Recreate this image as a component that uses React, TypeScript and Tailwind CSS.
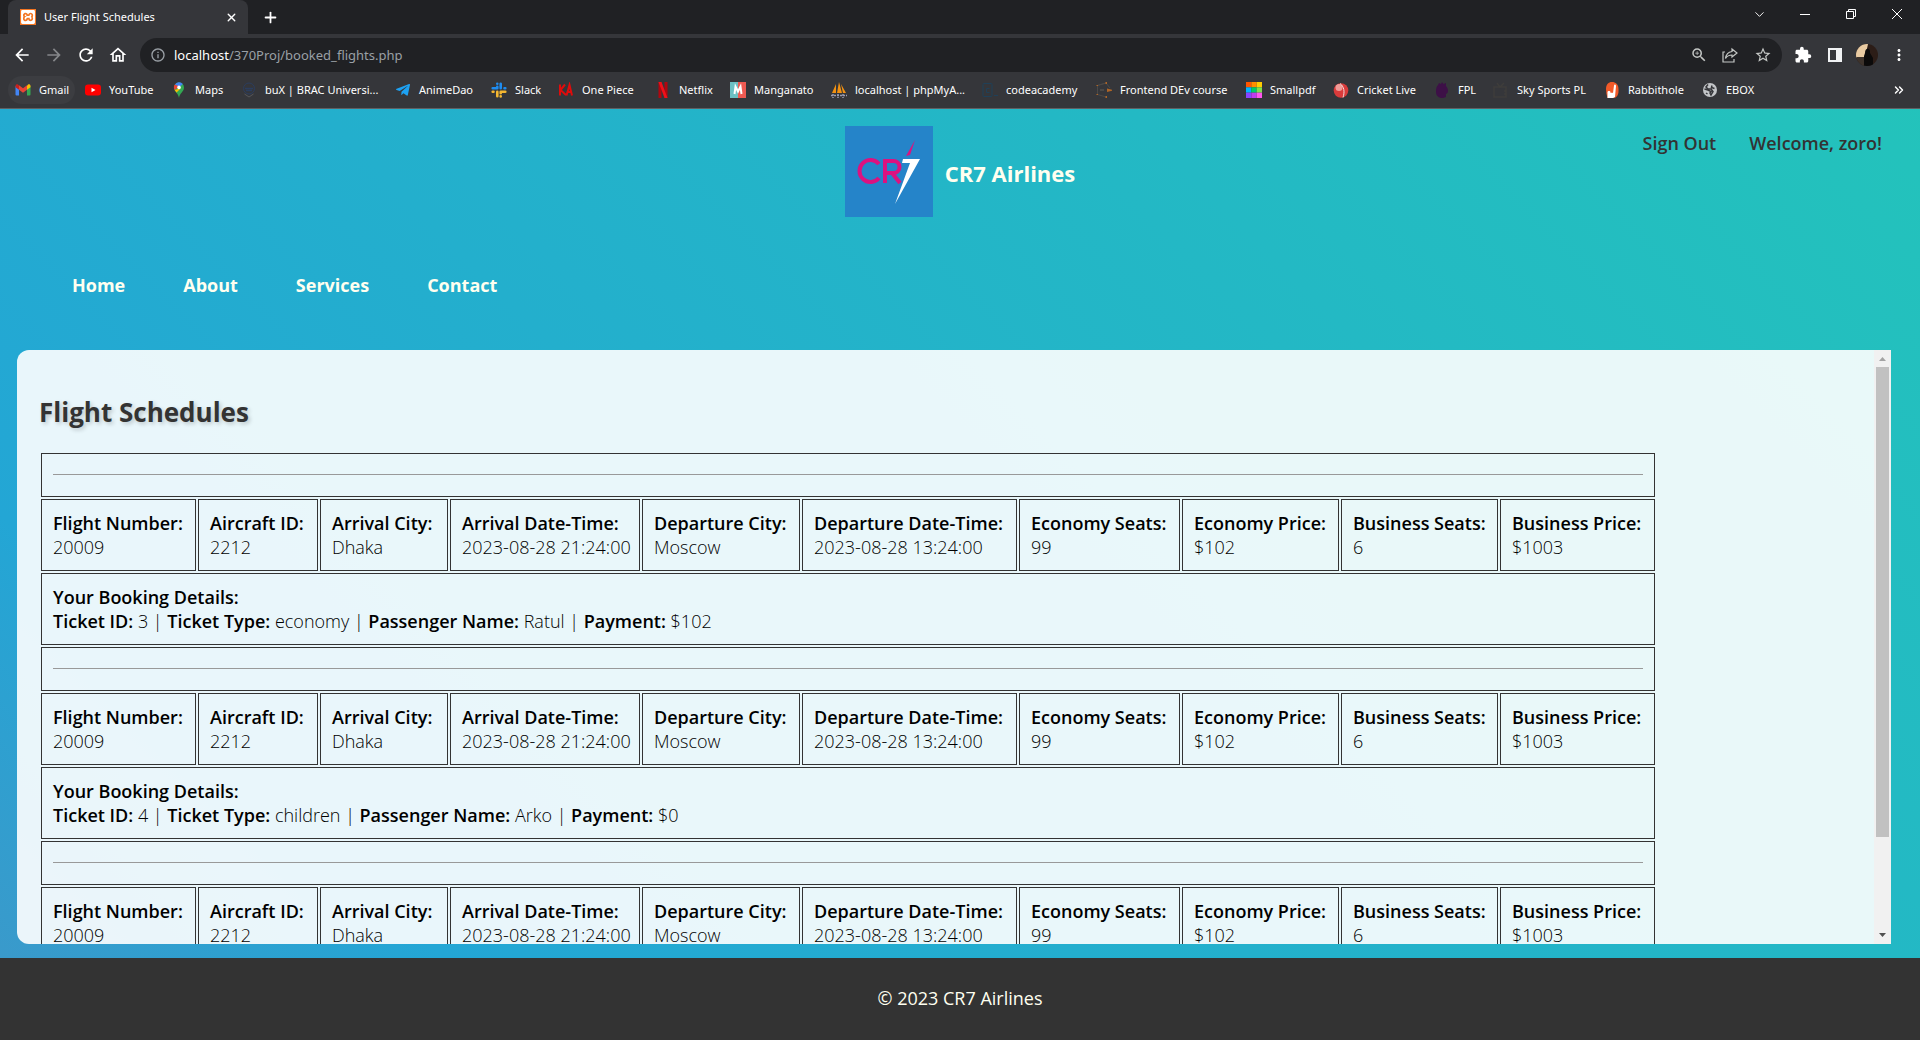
import React from "react";
import { ChevronDown, ChevronsRight, Plus, X } from "lucide-react";
import { SiXampp } from "react-icons/si";
import { FaTelegramPlane } from "react-icons/fa";
import { MdExtension, MdMoreVert, MdOutlineHome, MdRefresh, MdOutlineInfo, MdArrowBack, MdArrowForward, MdZoomIn, MdStarOutline } from "react-icons/md";

const svg = "h-4 w-4 shrink-0";

function GmailIcon() {
  return (
    <svg className={svg} viewBox="0 0 16 16">
      <path d="M0.5 4v8.5a1 1 0 0 0 1 1H4V7z" fill="#4285f4" />
      <path d="M15.5 4v8.5a1 1 0 0 1-1 1H12V7z" fill="#34a853" />
      <path d="M12 3.8v4l3.5-2.6V4c0-1.6-1.6-2.2-2.7-1.3z" fill="#fbbc04" />
      <path d="M4 7.8v-4.5l4 3 4-3v4.5l-4 3z" fill="#ea4335" />
      <path d="M0.5 4v1.2L4 7.8v-4.5l-.8-.6C2.1 1.9.5 2.5.5 4z" fill="#c5221f" />
    </svg>
  );
}
function YoutubeIcon() {
  return (
    <svg className={svg} viewBox="0 0 16 16">
      <rect y="2.5" width="16" height="11" rx="3" fill="#f00" />
      <path d="M6.5 5.7v4.6l4-2.3z" fill="#fff" />
    </svg>
  );
}
function MapsIcon() {
  return (
    <svg className={svg} viewBox="0 0 16 16">
      <path d="M3 5.5A5 5 0 0 1 13 5.5C13 10 8.8 10.5 8 16 7.2 10.5 3 10 3 5.5z" fill="#34a853" />
      <path d="M3.9 2.7 8 5.5l3.8-3.6A5 5 0 0 0 3.9 2.7z" fill="#4285f4" />
      <path d="M3.9 2.4A5 5 0 0 0 3.7 8L8 4.5z" fill="#ea4335" />
      <path d="M3.7 8c.5 1 1.2 1.8 1.9 2.6L10 6z" fill="#fbbc04" />
      <circle cx="8" cy="5.4" r="1.8" fill="#fff" />
    </svg>
  );
}
function BuxIcon() {
  return (
    <svg className={svg} viewBox="0 0 16 16" fill="none">
      <circle cx="8" cy="6.5" r="5.5" stroke="#2b3d5e" />
      <path d="M4 6.5h8M5 8.5h6" stroke="#2b3d5e" strokeWidth="1.5" />
      <path d="M3.5 12 8 15l4.5-3" stroke="#55565a" />
    </svg>
  );
}
function SlackIcon() {
  return (
    <svg className={svg} viewBox="0 0 16 16" strokeWidth="2.6" strokeLinecap="round">
      <path d="M6.3 4.8v1.5M1.7 6.3h4.6M6.3 1.7v.1M9.7 1.7v4.6M13.5 6.3h.8" stroke="#1e8cf0" />
      <path d="M1.7 9.7h.8M6.3 9.7v4.6M9.7 9.7h4.6M9.7 9.7v1.5M9.7 14.3v.1" stroke="#f5b731" />
    </svg>
  );
}
function KaIcon() {
  return (
    <svg className={svg} viewBox="0 0 16 16" fill="none" stroke="#e00b0b" strokeWidth="2">
      <path d="M2 2.5v11M7 2.5 2.5 8 8 13M8.5 13.5l3-10.5 2.5 10.5M9.5 10h4" />
    </svg>
  );
}
function NetflixIcon() {
  return (
    <svg className={svg} viewBox="0 0 16 16">
      <path d="M3.5 0h3v16h-3zM9.5 0h3v16h-3z" fill="#b1060f" />
      <path d="M3.5 0h3l6 16h-3z" fill="#f0101a" />
    </svg>
  );
}
function ManganatoIcon() {
  return (
    <svg className={svg} viewBox="0 0 16 16">
      <path d="M0 0h8v16H0z" fill="#6cc0c4" />
      <path d="M8 0h8v16H8z" fill="#ee5a52" />
      <path d="M4.5 12 5.5 4.5l2.5 5 2.5-5 1 7.5" fill="none" stroke="#fff" strokeWidth="2" />
    </svg>
  );
}
function PhpMyAdminIcon() {
  return (
    <svg className={svg} viewBox="0 0 16 16">
      <path d="M1 11 5 2v9zM6 11 8 0l3 11zM10 2l5 9h-3z" fill="#f29111" />
      <path d="M0 13.5h16M2 12v4M7 12v4M12 12v4" stroke="#9b9bb0" strokeWidth="1.5" strokeDasharray="2 1" />
    </svg>
  );
}
function CodeIcon() {
  return (
    <svg className={svg} viewBox="0 0 16 16" fill="none" stroke="#1f4058">
      <rect x="1" y="1.5" width="9" height="13" rx="1" />
      <path d="M7.5 6.5h-3v4h3M12 13.5h4" />
    </svg>
  );
}
function FrontendIcon() {
  return (
    <svg className={svg} viewBox="0 0 16 16" fill="none">
      <path d="M10 1 1.5 3.5v9L10 15M1.5 3.5 10 1l4 5" stroke="#4b4947" />
      <path d="M4 8h4" stroke="#4b4947" strokeWidth="2" />
      <path d="M11 6.5v3.5l5-1.2v-1z" fill="#b06526" />
      <path d="M9.5 0h1.5v2H9.5zM.5 3h1.5v1H.5zM.5 12h1.5v1H.5zM9.5 14h1.5v2H9.5z" fill="#b06526" />
    </svg>
  );
}
function SmallpdfIcon() {
  const cells = ["#ff5500", "#ff8c00", "#ffcc00", "#00b4ff", "#00cc66", "#7ddf4f", "#8844ff", "#c03bf0", "#ff55ee"];
  return (
    <svg className={svg} viewBox="0 0 15 15">
      {cells.map((c, i) => (
        <rect key={c} x={(i % 3) * 5} y={Math.floor(i / 3) * 5} width="5" height="5" fill={c} />
      ))}
    </svg>
  );
}
function CricketIcon() {
  return (
    <svg className={svg} viewBox="0 0 16 16">
      <circle cx="8" cy="8.5" r="7.3" fill="#d93b3b" />
      <circle cx="6" cy="5.5" r="3.5" fill="#f5b5b0" opacity=".8" />
      <path d="M7 1.5c4 3 5 8 3 14" stroke="#f4dcdc" fill="none" />
    </svg>
  );
}
function FplIcon() {
  return (
    <svg className={svg} viewBox="0 0 16 16">
      <path d="M4 3 5 1l2 1 1-2 1.5 2L12 1v3c2 2 2.5 5 1.5 7l-1.5 1v3l-3 1c-4 0-7-2-7-6 0-3 0-5 2-7z" fill="#3d1047" />
    </svg>
  );
}
function SkyIcon() {
  return (
    <svg className={svg} viewBox="0 0 16 16" fill="none" stroke="#3e3d3b" strokeWidth="1.5">
      <path d="M1 5h12v10H1zM4 1l3 4 4-4M11 9h2M11 12h2" />
    </svg>
  );
}
function RabbitIcon() {
  return (
    <svg className={svg} viewBox="0 0 16 16">
      <path d="M2 7C2 2.5 4.5 0 8 0s6.5 2.5 6.5 7v2c0 4-2 7-5 7H3.5C2.5 13 2 10 2 7z" fill="#f15a29" />
      <path d="M3.5 16V10c0-1.5 3-1.5 3 0v1c1-.5 2-.5 2.5 0L10 3.5c.3-1.5 2-1 2 .5L11 15l-2 1z" fill="#fff" />
    </svg>
  );
}
function EboxIcon() {
  return (
    <svg className={svg} viewBox="0 0 16 16">
      <circle cx="8" cy="8" r="7" fill="#c3c5c8" />
      <path d="M6 2.5 4 5l2 2h3l2 2.5-2 3.5-1-2 1-1.5-3-1.5-3.5-1M10 3.5 9.5 5.5l3 1M4 11l1.5 1" fill="none" stroke="#35363a" strokeWidth="1.5" />
    </svg>
  );
}

const bookmarks = [
  { label: "Gmail", icon: <GmailIcon />, style: "mr-2.5 w-[67px] rounded-full bg-[#3c3d41] pl-[7px]" },
  { label: "YouTube", icon: <YoutubeIcon />, style: "w-[86px]" },
  { label: "Maps", icon: <MapsIcon />, style: "w-[70px]" },
  { label: "buX | BRAC Universi...", icon: <BuxIcon />, style: "w-[154px]" },
  { label: "AnimeDao", icon: <FaTelegramPlane className="h-4 w-4 shrink-0 text-[#1da1f2]" />, style: "w-[96px]" },
  { label: "Slack", icon: <SlackIcon />, style: "w-[67px]" },
  { label: "One Piece", icon: <KaIcon />, style: "w-[97px]" },
  { label: "Netflix", icon: <NetflixIcon />, style: "w-[75px]" },
  { label: "Manganato", icon: <ManganatoIcon />, style: "w-[101px]" },
  { label: "localhost | phpMyA...", icon: <PhpMyAdminIcon />, style: "w-[151px]" },
  { label: "codeacademy", icon: <CodeIcon />, style: "w-[114px]" },
  { label: "Frontend DEv course", icon: <FrontendIcon />, style: "w-[150px]" },
  { label: "Smallpdf", icon: <SmallpdfIcon />, style: "w-[87px]" },
  { label: "Cricket Live", icon: <CricketIcon />, style: "w-[101px]" },
  { label: "FPL", icon: <FplIcon />, style: "w-[59px]" },
  { label: "Sky Sports PL", icon: <SkyIcon />, style: "w-[111px]" },
  { label: "Rabbithole", icon: <RabbitIcon />, style: "w-[98px]" },
  { label: "EBOX", icon: <EboxIcon />, style: "w-[70px]" },
];

function Browser() {
  return (
    <div className="shrink-0 bg-[#35363a] font-['Noto_Sans',sans-serif] text-white">
      <div className="flex h-[34px] items-stretch bg-[#202124]">
        <div className="ml-2 flex w-60 items-center rounded-t-lg bg-[#35363a] pr-2.5 pl-3">
          <span className="flex h-4 w-4 items-center justify-center bg-[#f37623]">
            <SiXampp className="h-3.5 w-3.5 text-white" />
          </span>
          <span className="ml-2 flex-1 text-[11px]">User Flight Schedules</span>
          <button aria-label="Close tab"><X size={13} strokeWidth={2.5} /></button>
        </div>
        <button aria-label="New tab" className="ml-3.5"><Plus size={17} strokeWidth={2.5} /></button>
        <div className="ml-auto flex items-center pb-1.5">
          <button aria-label="Search tabs" className="flex w-[46px] justify-center"><ChevronDown size={15} strokeWidth={1.5} /></button>
          <button aria-label="Minimize" className="flex w-[46px] justify-center"><svg width="10" height="10"><path d="M0 5.5h10" stroke="#fff" /></svg></button>
          <button aria-label="Restore" className="flex w-[46px] justify-center">
            <svg width="10" height="10" fill="none" stroke="#fff"><path d="M.5 2.5h7v7h-7zM2.5 2.5v-2h7v7h-2" /></svg>
          </button>
          <button aria-label="Close" className="flex w-[46px] justify-center"><svg width="10" height="10"><path d="M0 0l10 10M10 0L0 10" stroke="#fff" /></svg></button>
        </div>
      </div>
      <div className="flex h-[42px] items-center px-3">
        <button aria-label="Back" className="mr-3"><MdArrowBack size={20} /></button>
        <button aria-label="Forward" className="mr-3 text-[#85878a]"><MdArrowForward size={20} /></button>
        <button aria-label="Reload" className="mr-3"><MdRefresh size={20} /></button>
        <button aria-label="Home page" className="mr-3"><MdOutlineHome size={20} /></button>
        <div className="flex h-[34px] flex-1 items-center rounded-full bg-[#202124] px-2.5">
          <MdOutlineInfo size={16} className="text-[#9aa0a6]" />
          <span className="ml-2 flex-1 pt-0.5 text-[13px] text-[#9aa0a6]"><span className="text-white">localhost</span>/370Proj/booked_flights.php</span>
          <button aria-label="Zoom" className="text-[#c4c7c5]"><MdZoomIn size={18} /></button>
          <button aria-label="Share" className="ml-3.5">
            <svg width="16" height="16" viewBox="0 0 16 16" fill="none" stroke="#c4c7c5" strokeWidth="1.2"><path d="M3 5H1v10h11v-3M10 2l5 4-5 4V8c-3 0-5 1-6.5 3.5C4 7.5 6 5 10 4.5z" /></svg>
          </button>
          <button aria-label="Bookmark" className="ml-4 text-[#c4c7c5]"><MdStarOutline size={18} /></button>
        </div>
        <button aria-label="Extensions" className="ml-3"><MdExtension size={18} /></button>
        <button aria-label="Side panel" className="ml-4"><svg width="14" height="14"><path d="M0 0h14v14H0zM2 2v10h6V2z" fill="#f1f3f4" fillRule="evenodd" /></svg></button>
        <button aria-label="Profile" className="ml-3.5">
          <svg width="22" height="22" viewBox="0 0 22 22">
            <clipPath id="avatar"><circle cx="11" cy="11" r="11" /></clipPath>
            <g clipPath="url(#avatar)">
              <path d="M0 0h22v22H0z" fill="#2c1d17" />
              <path d="M0 0h12l-3 14H0z" fill="#e9cba2" />
              <path d="M0 13h10v9H0z" fill="#3d332c" />
              <path d="M8 22V12l1-3c0-6 6-5 5 0l3 5v8z" fill="#0b0a0a" />
            </g>
          </svg>
        </button>
        <button aria-label="Menu" className="ml-3"><MdMoreVert size={18} /></button>
      </div>
      <div className="flex h-[33px] items-center border-b border-[#5f6063] pb-1 pl-2 pr-3.5">
        {bookmarks.map((b) => (
          <a key={b.label} href="#" className={"flex h-7 shrink-0 items-center gap-2 whitespace-nowrap text-[11px] " + b.style}>
            {b.icon}
            {b.label}
          </a>
        ))}
        <button aria-label="More bookmarks" className="ml-auto"><ChevronsRight size={14} strokeWidth={2.5} /></button>
      </div>
    </div>
  );
}

function Logo() {
  return (
    <svg className="h-[91px] w-[88px]" viewBox="0 0 88 91" role="img" aria-label="CR7 logo">
      <path d="M0 0h88v91H0z" fill="#2584c9" />
      <g fill="none" stroke="#dc1280" strokeWidth="4">
        <path d="M34 38a11 11 0 1 0 0 14" />
        <path d="M40 57V35h8.5a6 6 0 0 1 0 12H40M47 47l8 10" />
      </g>
      <path d="M70 14 65 29l-4 1z" fill="#dc1280" />
      <path d="M58 33h17L50 78l15-41h-8z" fill="#fff" />
    </svg>
  );
}

const columns = [
  { label: "Flight Number:", value: "20009", width: "w-[155px]" },
  { label: "Aircraft ID:", value: "2212", width: "w-[120px]" },
  { label: "Arrival City:", value: "Dhaka", width: "w-[128px]" },
  { label: "Arrival Date-Time:", value: "2023-08-28 21:24:00", width: "w-[190px]" },
  { label: "Departure City:", value: "Moscow", width: "w-[158px]" },
  { label: "Departure Date-Time:", value: "2023-08-28 13:24:00", width: "w-[215px]" },
  { label: "Economy Seats:", value: "99", width: "w-[161px]" },
  { label: "Economy Price:", value: "$102", width: "w-[157px]" },
  { label: "Business Seats:", value: "6", width: "w-[157px]" },
  { label: "Business Price:", value: "$1003", width: "w-[155px]" },
];

const flights = [
  { key: 1, booking: { id: "3", type: "economy", name: "Ratul", payment: "$102" } },
  { key: 2, booking: { id: "4", type: "children", name: "Arko", payment: "$0" } },
  { key: 3, booking: null },
];

const cell = "border border-[#333] py-[11px] pl-[11px] text-left";

function Label({ children }: { children: React.ReactNode }) {
  return <strong className="font-semibold">{children}</strong>;
}

function Schedule() {
  return (
    <table className="w-[1618px] table-fixed border-separate border-spacing-[2px] whitespace-nowrap text-[18px] leading-6 font-light text-black">
      <colgroup>
        {columns.map((c) => (
          <col key={c.label} className={c.width} />
        ))}
      </colgroup>
      <tbody>
        {flights.map(({ key, booking }) => (
          <React.Fragment key={key}>
            <tr>
              <td colSpan={10} className={cell + " pr-[11px]"}>
                <hr className="mt-[9px] mb-2.5 border-t border-[#999]" />
              </td>
            </tr>
            <tr>
              {columns.map((c) => (
                <td key={c.label} className={cell}>
                  <Label>{c.label}</Label>
                  <br />
                  {c.value}
                </td>
              ))}
            </tr>
            {booking && (
              <tr>
                <td colSpan={10} className={cell}>
                  <Label>Your Booking Details:</Label>
                  <br />
                  <Label>Ticket ID:</Label> {booking.id} | <Label>Ticket Type:</Label> {booking.type} | <Label>Passenger Name:</Label>{" "}
                  {booking.name} | <Label>Payment:</Label> {booking.payment}
                </td>
              </tr>
            )}
          </React.Fragment>
        ))}
      </tbody>
    </table>
  );
}

export default function App() {
  return (
    <div className="flex h-screen flex-col overflow-hidden font-['Open_Sans',sans-serif]">
      <Browser />
      <div className="flex min-h-0 flex-1 flex-col bg-[linear-gradient(45deg,#e73c7e_-122%,#23a6d5_16%,#23d5ab_153%)]">
        <header className="grid grid-cols-[1fr_auto_1fr] pt-[17px]">
          <div />
          <div className="flex items-center gap-3">
            <Logo />
            <h1 className="pt-1 text-[22px] font-bold text-[#fffff0]">CR7 Airlines</h1>
          </div>
          <div className="flex items-start justify-end gap-[33px] pr-[38px] text-[18px] leading-[34px] font-semibold text-[#333]">
            <a href="#">Sign Out</a>
            <span>Welcome, zoro!</span>
          </div>
        </header>
        <nav className="flex gap-[58px] pt-14 pl-[72px] pb-[53px] text-[18px] leading-6 font-bold text-[#fffff0]">
          <a href="#">Home</a>
          <a href="#">About</a>
          <a href="#">Services</a>
          <a href="#">Contact</a>
        </nav>
        <main className="mr-[29px] mb-[14px] ml-[17px] flex min-h-0 flex-1 overflow-hidden rounded-l-xl bg-white/90">
          <section className="min-w-0 flex-1 overflow-hidden px-[22px] pt-11">
            <h2 className="mb-[21px] text-[26px] leading-9 font-bold text-[#333] text-shadow-[2px_2px_4px_rgb(0_0_0/0.2)]">Flight Schedules</h2>
            <Schedule />
          </section>
          <div className="flex w-[17px] shrink-0 flex-col items-center bg-[#f1f1f1]">
            <svg width="17" height="17" className="shrink-0"><path d="M5 11h7L8.5 7z" fill="#a3a3a3" /></svg>
            <div className="w-[13px] flex-[470] bg-[#c1c1c1]" />
            <div className="flex-[90]" />
            <svg width="17" height="17" className="shrink-0"><path d="M5 6h7l-3.5 4z" fill="#505050" /></svg>
          </div>
        </main>
      </div>
      <footer className="flex h-[82px] shrink-0 items-center justify-center bg-[#333] pb-0.5 text-[18px] text-[#fffff0]">© 2023 CR7 Airlines</footer>
    </div>
  );
}
